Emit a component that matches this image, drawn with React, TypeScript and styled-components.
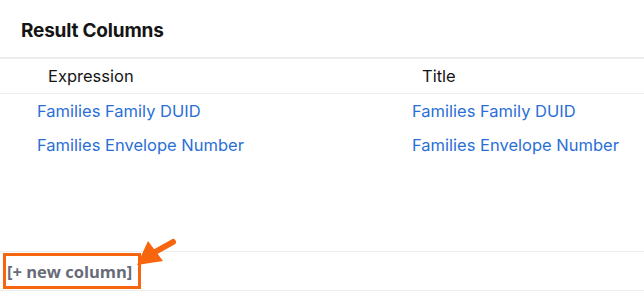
import React from "react";
import styled, { createGlobalStyle } from "styled-components";

const Global = createGlobalStyle`
  html, body { margin: 0; padding: 0; background: #fff; }
  body { font-family: "Open Sans", "Liberation Sans", sans-serif; }
  * { box-sizing: border-box; }
`;

const Panel = styled.div`
  width: 644px;
  height: 291px;
  display: flex;
  flex-direction: column;
  background: #fff;
  position: relative;
`;

const Header = styled.div`
  height: 59px;
  padding: 3px 0 0 21px;
  display: flex;
  align-items: center;
  border-bottom: 2px solid #ececec;
`;

const Heading = styled.h2`
  margin: 0;
  font-family: "Inter", "Liberation Sans", sans-serif;
  font-weight: 700;
  font-size: 19px;
  color: #151515;
  letter-spacing: -0.2px;
`;

const Table = styled.div`
  flex: 1;
  display: flex;
  flex-direction: column;
`;

const Row = styled.div<{ $head?: boolean }>`
  display: grid;
  grid-template-columns: 375px 1fr;
  height: ${(p) => (p.$head ? "35px" : "34px")};
  align-items: center;
  border-bottom: ${(p) => (p.$head ? "1px solid #ececec" : "none")};
`;

const HeadCell = styled.div`
  font-family: "Inter", "Liberation Sans", sans-serif;
  font-size: 16.5px;
  color: #151515;
  padding-left: 48px;
  &:nth-child(2) { padding-left: 47px; }
`;

const Cell = styled.a`
  font-family: "Inter", "Liberation Sans", sans-serif;
  font-size: 16.5px;
  color: #2b6fd6;
  text-decoration: none;
  padding-left: 37px;
`;

const Spacer = styled.div`
  flex: 1;
  border-bottom: 1px solid #ececec;
`;

const Footer = styled.div`
  height: 39px;
  border-bottom: 1px solid #ececec;
  display: flex;
  align-items: center;
`;

const AddButton = styled.button`
  margin-left: 3px;
  height: 36px;
  width: 138px;
  border: 3px solid #f7650f;
  background: #fff;
  padding: 0 0 0 1px;
  text-align: left;
  font-family: "Open Sans", "Liberation Sans", sans-serif;
  font-weight: 700;
  font-size: 16.5px;
  color: #676c78;
  cursor: pointer;
`;

const Arrow = styled.svg`
  position: absolute;
  left: 130px;
  top: 234px;
  width: 50px;
  height: 36px;
`;

const rows = [
  ["Families Family DUID", "Families Family DUID"],
  ["Families Envelope Number", "Families Envelope Number"],
];

export default function App() {
  return (
    <>
      <Global />
      <Panel>
        <Header>
          <Heading>Result Columns</Heading>
        </Header>
        <Table>
          <Row $head>
            <HeadCell>Expression</HeadCell>
            <HeadCell>Title</HeadCell>
          </Row>
          {rows.map((r, i) => (
            <Row key={i}>
              <Cell href="#">{r[0]}</Cell>
              <Cell href="#">{r[1]}</Cell>
            </Row>
          ))}
          <Spacer />
        </Table>
        <Footer>
          <AddButton>[+ new column]</AddButton>
        </Footer>
        <Arrow viewBox="0 0 50 36">
          <line x1="43" y1="8" x2="25" y2="18" stroke="#f7650f" strokeWidth="6" strokeLinecap="round" />
          <polygon points="7,31 18,7 33,27" fill="#f7650f" />
        </Arrow>
      </Panel>
    </>
  );
}
